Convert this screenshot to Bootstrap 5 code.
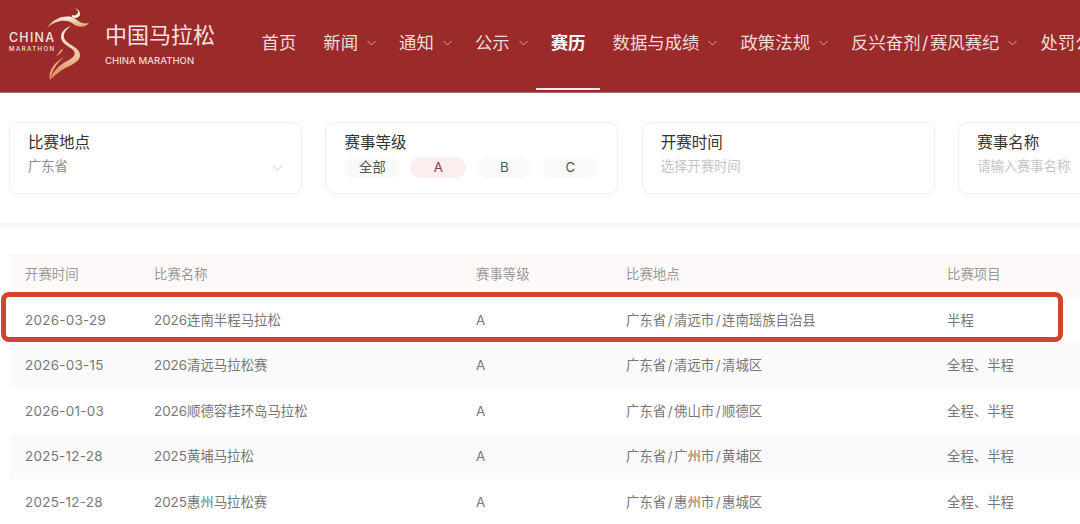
<!DOCTYPE html>
<html lang="zh-CN">
<head>
  <meta charset="UTF-8">
  <meta name="viewport" content="width=device-width, initial-scale=1.0">
  <title>中国马拉松 - 赛历</title>
  <link rel="stylesheet" href="https://cdn.jsdelivr.net/npm/bootstrap@5.3.0/dist/css/bootstrap.min.css">
  <style>
    html, body { height: 524px; overflow: hidden; }
    body { font-family: "Inter", "Noto Sans CJK SC", sans-serif; background: #fff; color: #777; width: 1080px; }

    .top-bar { height: 93px; background: #9b2a2a; border-bottom: 1px solid #a9696a; flex-wrap: nowrap; padding: 0; overflow: hidden; justify-content: flex-start; }
    .brand-box { width: 248px; flex: none; height: 92px; }
    .brand-logo { display: block; width: 100px; height: 92px; flex: none; }
    .brand-text { padding-left: 5px; }
    .brand-cn { font-size: 22px; line-height: 30px; color: #f3e3e0; margin-top: 20px; }
    .brand-en { font-size: 9.6px; line-height: 14px; color: #eed9d6; margin-top: 4px; font-weight: 500; }
    .navbar-expand .main-links { flex-wrap: nowrap; flex: none; }
    .navbar-expand .main-links .nav-link { color: #efdcd9; font-size: 17.4px; line-height: 24px; padding: 31px 13.5px 37px; white-space: nowrap; display: flex; align-items: center; position: relative; }
    .navbar-expand .main-links .has-caret { padding-right: 9.5px; }
    .navbar-expand .main-links .nav-link.active { color: #fff; font-weight: 700; }
    .main-links .nav-link.active::after { content: ""; position: absolute; left: -1px; right: -1px; bottom: 2px; height: 2px; background: #eee; }
    .caret-icon { width: 9px; height: 6px; margin-left: 9px; flex: none; margin-top: -1px; }

    .filter-row { padding: 29px 0 0 9px; gap: 23.4px; height: 134px; border-bottom: 4px solid #f8f8f8; }
    .filter-box { width: 293px; height: 72px; flex: none; border: 1px solid #eeeeee; border-radius: 9px; padding: 10px 18px; position: relative; }
    .filter-title { font-size: 15.5px; line-height: 20px; color: #333; }
    .filter-value { font-size: 13.3px; line-height: 20px; margin-top: 3px; color: #8c8c8c; }
    .filter-value.is-empty { color: #c4c4c4; }
    .filter-caret { position: absolute; right: 18px; top: 41px; width: 11px; height: 7px; }
    .pill-row { gap: 10px; margin-top: 4px; }
    .grade-pill { width: 56px; height: 21px; line-height: 21px; border-radius: 11px; background: #f9f9f9; text-align: center; font-size: 13.3px; color: #555; }
    .grade-pill.picked { background: #fbeeee; color: #8e3a3f; }

    .table-wrap { padding: 27px 0 0 10px; position: relative; }
    .race-table { width: 1200px; table-layout: fixed; margin: 0; --bs-table-bg: transparent; --bs-table-color: #777; }
    .race-table th, .race-table td { border: 0; padding: 0 0 0 15px; height: 45.5px; vertical-align: middle; font-size: 13.4px; font-weight: 400; white-space: nowrap; }
    .race-table thead th { background: #fdf9f8; color: #999; height: 43px; padding-bottom: 2px; }
    .race-table tbody tr:nth-child(even) td { background: #fafafa; }
    .race-table .date-cell { letter-spacing: .3px; }
    .col-date { width: 129px; }
    .col-name { width: 322px; }
    .col-grade { width: 150px; }
    .col-place { width: 321px; }
    .path-sep { margin: 0 1.5px; }
    .mark-frame { position: absolute; left: 1px; top: 65px; width: 1062px; height: 50px; border: 5px solid #d0452f; border-radius: 8px; pointer-events: none; }
  </style>
</head>
<body>
  <nav class="navbar navbar-expand top-bar">
    <div class="d-flex brand-box">
      <svg class="brand-logo" viewBox="0 0 100 92">
        <defs>
          <linearGradient id="bodyFill" x1="0" y1="0" x2="0" y2="1">
            <stop offset="0" stop-color="#fff3ea"/>
            <stop offset=".5" stop-color="#f0c9a8"/>
            <stop offset="1" stop-color="#d9894f"/>
          </linearGradient>
        </defs>
        <path d="M75 8 C81 10 82 17 76 18 C73 18 71 16 72 15 C74 16 78 15 78 12 C78 10 76 9 75 8Z" fill="#fff3ea"/>
        <path d="M47 28 C52 20 62 15 72 17 C77 19 80 25 89 23 C84 29 76 27 72 23 C66 19 56 20 47 28Z" fill="url(#bodyFill)"/>
        <path d="M71 26 C65 30 62 35 65 40 C70 46 81 48 80 56 C79 64 66 66 58 73 C54 76 52 78 50 80 C52 72 60 64 69 60 C76 56 76 52 72 49 C66 45 61 42 61 37 C61 32 65 28 71 26Z" fill="url(#bodyFill)"/>
        <path d="M50 80 C48 72 53 63 64 57 C56 64 52 71 50 80Z M62 49 C59 52 58 54 56 56 C59 55 61 53 63 50Z" fill="#e8a77b"/>
        <text x="9" y="42" font-family="Inter, sans-serif" font-size="12.4" font-weight="500" fill="#f5e6e3" textLength="45">CHINA</text>
        <text x="9" y="50.5" font-family="Inter, sans-serif" font-size="6" font-weight="500" fill="#f5e6e3" textLength="45">MARATHON</text>
      </svg>
      <div class="brand-text">
        <div class="brand-cn">中国马拉松</div>
        <div class="brand-en">CHINA MARATHON</div>
      </div>
    </div>
    <ul class="navbar-nav main-links">
      <li class="nav-item"><a class="nav-link" href="#">首页</a></li>
      <li class="nav-item"><a class="nav-link has-caret" href="#">新闻<svg class="caret-icon" viewBox="0 0 9 6"><path d="M.5 1 4.5 5 8.5 1" fill="none" stroke="#d9a9a6" stroke-width="1"/></svg></a></li>
      <li class="nav-item"><a class="nav-link has-caret" href="#">通知<svg class="caret-icon" viewBox="0 0 9 6"><path d="M.5 1 4.5 5 8.5 1" fill="none" stroke="#d9a9a6" stroke-width="1"/></svg></a></li>
      <li class="nav-item"><a class="nav-link has-caret" href="#">公示<svg class="caret-icon" viewBox="0 0 9 6"><path d="M.5 1 4.5 5 8.5 1" fill="none" stroke="#d9a9a6" stroke-width="1"/></svg></a></li>
      <li class="nav-item"><a class="nav-link active" href="#">赛历</a></li>
      <li class="nav-item"><a class="nav-link has-caret" href="#">数据与成绩<svg class="caret-icon" viewBox="0 0 9 6"><path d="M.5 1 4.5 5 8.5 1" fill="none" stroke="#d9a9a6" stroke-width="1"/></svg></a></li>
      <li class="nav-item"><a class="nav-link has-caret" href="#">政策法规<svg class="caret-icon" viewBox="0 0 9 6"><path d="M.5 1 4.5 5 8.5 1" fill="none" stroke="#d9a9a6" stroke-width="1"/></svg></a></li>
      <li class="nav-item"><a class="nav-link has-caret" href="#">反兴奋剂<span class="path-sep">/</span>赛风赛纪<svg class="caret-icon" viewBox="0 0 9 6"><path d="M.5 1 4.5 5 8.5 1" fill="none" stroke="#d9a9a6" stroke-width="1"/></svg></a></li>
      <li class="nav-item"><a class="nav-link" href="#">处罚公告</a></li>
    </ul>
  </nav>

  <div class="d-flex filter-row">
    <div class="filter-box">
      <div class="filter-title">比赛地点</div>
      <div class="filter-value">广东省</div>
      <svg class="filter-caret" viewBox="0 0 11 7"><path d="M.5 1 5.5 6 10.5 1" fill="none" stroke="#c8c8c8" stroke-width="1"/></svg>
    </div>
    <div class="filter-box">
      <div class="filter-title">赛事等级</div>
      <div class="d-flex pill-row">
        <div class="grade-pill">全部</div>
        <div class="grade-pill picked">A</div>
        <div class="grade-pill">B</div>
        <div class="grade-pill">C</div>
      </div>
    </div>
    <div class="filter-box">
      <div class="filter-title">开赛时间</div>
      <div class="filter-value is-empty">选择开赛时间</div>
    </div>
    <div class="filter-box">
      <div class="filter-title">赛事名称</div>
      <div class="filter-value is-empty">请输入赛事名称</div>
    </div>
  </div>

  <div class="table-wrap">
    <table class="table race-table">
      <colgroup><col class="col-date"><col class="col-name"><col class="col-grade"><col class="col-place"><col></colgroup>
      <thead>
        <tr><th>开赛时间</th><th>比赛名称</th><th>赛事等级</th><th>比赛地点</th><th>比赛项目</th></tr>
      </thead>
      <tbody id="race-rows"></tbody>
    </table>
    <div class="mark-frame"></div>
  </div>

  <script src="https://cdn.jsdelivr.net/npm/bootstrap@5.3.0/dist/js/bootstrap.bundle.min.js"></script>
  <script>
    const races = [
      ['2026-03-29', '2026连南半程马拉松', 'A', '广东省/清远市/连南瑶族自治县', '半程'],
      ['2026-03-15', '2026清远马拉松赛', 'A', '广东省/清远市/清城区', '全程、半程'],
      ['2026-01-03', '2026顺德容桂环岛马拉松', 'A', '广东省/佛山市/顺德区', '全程、半程'],
      ['2025-12-28', '2025黄埔马拉松', 'A', '广东省/广州市/黄埔区', '全程、半程'],
      ['2025-12-28', '2025惠州马拉松赛', 'A', '广东省/惠州市/惠城区', '全程、半程']
    ];
    document.getElementById('race-rows').innerHTML = races.map(r => `
      <tr><td class="date-cell">${r[0]}</td><td>${r[1]}</td><td>${r[2]}</td><td>${r[3].replace(/\//g, '<span class="path-sep">/</span>')}</td><td>${r[4]}</td></tr>`).join('');
  </script>
</body>
</html>
